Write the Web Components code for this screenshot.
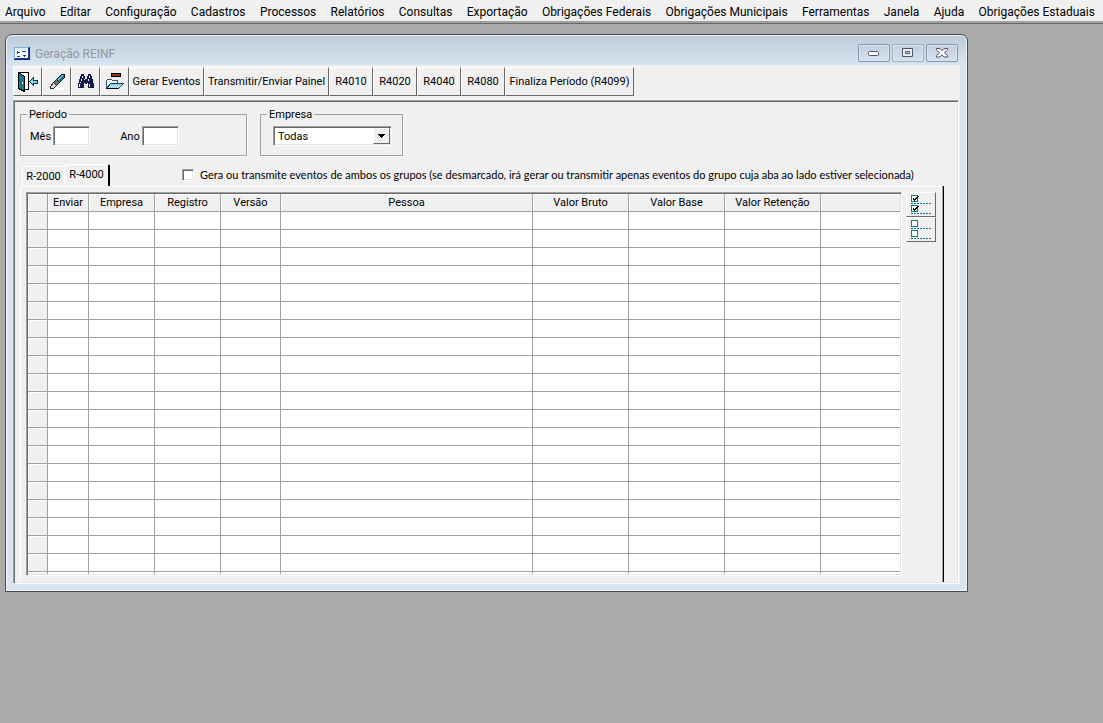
<!DOCTYPE html>
<html lang="pt-BR">
<head>
<meta charset="utf-8">
<title>Geração REINF</title>
<style>
    html, body {
        margin: 0;
        height: 100%;
    }

    body {
        display: flex;
        flex-direction: column;
        background: #a9abaa;
        color: #000;
        font: 11px/13px Roboto, "Liberation Sans", Arial, sans-serif;
        --face: #f0f0f0;
        --shadow: #a0a0a0;
        --dark: #696969;
        --light: #e3e3e3;
        --caption: #d7e4f2;
    }

    .desktop {
        flex: 1;
        min-height: 0;
        display: flex;
        padding: 10px 135px 131px 5px;
    }
</style>
</head>
<body>
<menu-bar></menu-bar>
<main class="desktop">
    <mdi-window caption="Geração REINF">
        <tool-bar slot="toolbar"></tool-bar>
        <reinf-filters></reinf-filters>
        <tab-sheet>
            <event-grid></event-grid>
            <mark-buttons slot="side"></mark-buttons>
        </tab-sheet>
    </mdi-window>
</main>

<script>
function attach(host, html) {
    host.attachShadow({ mode: 'open' }).innerHTML = html;
}

class MenuBar extends HTMLElement {
    constructor() {
        super();
        const items = ['Arquivo', 'Editar', 'Configuração', 'Cadastros', 'Processos', 'Relatórios', 'Consultas',
            'Exportação', 'Obrigações Federais', 'Obrigações Municipais', 'Ferramentas', 'Janela', 'Ajuda',
            'Obrigações Estaduais'];
        attach(this, `
<style>
    :host {
        display: block;
        height: 21px;
        background: var(--face);
        border-bottom: 2px solid var(--shadow);
        box-shadow: 0 1px var(--dark);
        margin-bottom: 1px;
    }

    nav {
        display: flex;
        justify-content: space-between;
        padding: 0 8px 0 5px;
    }

    button {
        font: 12px/24px Roboto, "Noto Sans", sans-serif;
        color: #000;
        background: none;
        border: 0;
        padding: 0;
        white-space: nowrap;
    }
</style>
<nav>${items.map(text => `<button type="button">${text}</button>`).join('')}</nav>`);
    }
}

class MdiWindow extends HTMLElement {
    constructor() {
        super();
        attach(this, `
<style>
    :host {
        flex: 1;
        min-width: 0;
        display: flex;
        flex-direction: column;
        box-sizing: border-box;
        border: 1px solid #4b4b50;
        border-radius: 7px 7px 0 0;
        padding: 0 7px 7px;
        background: linear-gradient(#bccbd8, var(--caption) 30px);
        box-shadow: inset 0 0 0 1px #eef4fa;
    }

    header {
        display: flex;
        align-items: center;
        height: 30px;
        padding: 0 2px 0 1px;
        gap: 5px;
    }

    .caption {
        flex: 1;
        margin: 0;
        padding-top: 8px;
        font: 12px/16px Roboto, "Noto Sans", sans-serif;
        color: #9497a0;
    }

    .icon {
        padding-top: 6px;
    }

    header button {
        width: 32px;
        height: 18px;
        padding: 0;
        border: 1px solid #8796ad;
        border-radius: 2px;
        background: linear-gradient(#c3d1df, #d3e0ed);
        box-shadow: inset 0 0 0 1px #dbe6f1;
        display: grid;
        place-items: center;
    }

    header button:nth-of-type(2) {
        border-color: #a5adba;
    }

    .buttons {
        display: flex;
        gap: 2px;
        padding-top: 5px;
    }

    .client {
        flex: 1;
        min-height: 0;
        display: flex;
        flex-direction: column;
        background: var(--face);
    }

    .body {
        flex: 1;
        min-height: 0;
        display: flex;
        flex-direction: column;
        margin-right: 1px;
        border: 1px solid;
        border-color: var(--shadow) #fff #fff var(--shadow);
        box-shadow: inset 1px 1px var(--dark), inset -1px -1px var(--light);
        padding: 1px 0 1px 1px;
    }

    svg {
        display: block;
    }
</style>
<header>
    <svg class="icon" width="16" height="13" shape-rendering="crispEdges">
        <path fill="#10287c" d="M0 0h16v13H0z"/>
        <path fill="#7fa8dc" d="M0 0h15v12H0z"/>
        <path fill="#d8ecfa" d="M1 1h13v2H1z"/>
        <path fill="#f6fbff" d="M1 3h13v8H1z"/>
        <path fill="#1c3f94" d="M3 5h3v1H3zM3 4h1v3H3zM8 4h4v1H8zM3 9h3v1H3zM9 8h3v1H9zM10 9h1v1h-1zM14 1h1v11h-1zM1 11h14v1H1z"/>
    </svg>
    <h1 class="caption"></h1>
    <div class="buttons">
        <button type="button" aria-label="Minimizar"><svg width="12" height="6"><rect x=".5" y="1.5" width="10" height="4" rx="1" fill="#fff" stroke="#4e5563"/></svg></button>
        <button type="button" aria-label="Restaurar"><svg width="12" height="10"><path fill="#e8eef4" stroke="#4e5563" fill-rule="evenodd" d="M.5 .5h10v8H.5zM3.500 3.500h4v2h-4z"/></svg></button>
        <button type="button" aria-label="Fechar"><svg width="12" height="10"><path fill="#fff" stroke="#4e5563" d="M.5.5h3.500L6 2.700 8 .5h3.500v1.500L8.500 4.800l3 2.700V9H8L6 6.900 4 9H.5V7.500l3-2.700-3-2.800z"/></svg></button>
    </div>
</header>
<div class="client">
    <slot name="toolbar"></slot>
    <div class="body"><slot></slot></div>
</div>`);
        this.shadowRoot.querySelector('.caption').textContent = this.getAttribute('caption');
    }
}

class ToolBar extends HTMLElement {
    constructor() {
        super();
        const actions = ['R4010', 'R4020', 'R4040', 'R4080'];
        attach(this, `
<style>
    :host {
        display: flex;
        height: 29px;
        padding: 2px 0 4px;
    }

    button {
        display: grid;
        place-items: center;
        flex: none;
        box-sizing: border-box;
        width: 44px;
        height: 29px;
        padding: 0;
        border: 1px solid;
        border-color: #fff var(--dark) var(--dark) #fff;
        background: var(--face);
        color: #000;
        font: inherit;
        line-height: 15px;
        white-space: nowrap;
    }

    .tool { width: 29px; }
    .events { width: 75px; }
    .send { width: 125px; }
    .finish { width: 129px; }
</style>
<button class="tool" type="button" aria-label="Sair">
    <svg width="20" height="20" shape-rendering="crispEdges">
        <path fill="#fff" d="M1 1h9v16H1z"/>
        <path fill="#000" d="M0 0h11v1H0zM10 0h1v18h-1zM7 17h4v1H7z"/>
        <path fill="#16788a" stroke="#000" d="M.5.5l6 4v15l-6-3z"/>
        <path fill="#fff" d="M4 10h1v2H4z"/>
        <path fill="#7fd4ee" stroke="#0b3340" d="M11.500 9.500l4-4v2.500h3.500v3h-3.500v2.500z"/>
    </svg>
</button>
<button class="tool" type="button" aria-label="Limpar">
    <svg width="18" height="18" shape-rendering="crispEdges">
        <path fill="#fff" d="M0 14h16v3H0z"/>
        <path fill="#1f8298" stroke="#101820" d="M7.500 7.500l6-6h3v3l-6 6z"/>
        <path fill="#9adbe8" d="M9 7l5-5h1L9 8z"/>
        <path fill="#707070" stroke="#202020" d="M5.500 9.500l3-3 3 3-3 3z"/>
        <path fill="#d8d8d8" stroke="#303030" d="M2.500 13.500l3-4 3 3-3 3h-3z"/>
    </svg>
</button>
<button class="tool" type="button" aria-label="Localizar">
    <svg width="16" height="15" shape-rendering="crispEdges">
        <path fill="#121c4a" d="M3 0h3v2H3zM10 0h3v2h-3zM2 2h5v3h2V2h5v3h1v4h1v5h-6V9H6v5H0V9h1V5h1zM7 5h2v5H7z"/>
        <path fill="#fff" d="M4 2h1v2H4zM11 2h1v2h-1zM3 5h1v2H3zM10 5h1v2h-1zM1 10h1v3H1zM2 8h1v1H2zM11 10h1v3h-1zM6 5h1v1H6z"/>
    </svg>
</button>
<button class="tool" type="button" aria-label="Abrir">
    <svg width="19" height="17" shape-rendering="crispEdges">
        <path fill="#9c3c12" stroke="#000" d="M6.500 .5h9v3h-9z"/>
        <path fill="#fff" stroke="#35586c" d="M1.500 15.500v-8l1-1h4l1 1h5v3"/>
        <path fill="#83c6e2" stroke="#10506a" d="M1.500 15.500l4-5h13l-5 5z"/>
        <path stroke="#d9f4ff" stroke-dasharray="1 1" d="M5 12.500h11M4 13.500h11M4 14.500h10"/>
        <path fill="#000" d="M1 15h13v1H1z"/>
    </svg>
</button>
<button class="events" type="button">Gerar Eventos</button>
<button class="send" type="button">Transmitir/Enviar Painel</button>
${actions.map(text => `<button type="button">${text}</button>`).join('')}
<button class="finish" type="button">Finaliza Período (R4099)</button>`);
    }
}

class ReinfFilters extends HTMLElement {
    constructor() {
        super();
        attach(this, `
<style>
    :host {
        display: flex;
        gap: 13px;
        padding: 6px 5px 0;
    }

    fieldset {
        display: flex;
        align-items: center;
        box-sizing: border-box;
        height: 48px;
        margin: 0;
        padding: 0 9px 4px;
        border: 1px solid var(--shadow);
        box-shadow: 1px 1px #fff;
    }

    .period { width: 227px; gap: 30px; }
    .company { width: 143px; padding: 0 10px 4px 12px; }

    legend {
        margin-left: -3px;
        padding: 0 2px;
    }

    .company legend {
        margin-left: -6px;
    }

    .period label {
        display: flex;
        align-items: center;
        gap: 2px;
    }

    input, .combo {
        box-sizing: border-box;
        height: 20px;
        border: 1px solid;
        border-color: var(--shadow) #fff #fff var(--shadow);
        box-shadow: inset 1px 1px var(--dark), inset -1px -1px var(--light);
        background: #fff;
        font: inherit;
    }

    input {
        width: 37px;
        padding: 2px 3px;
    }

    .combo {
        flex: 1;
        display: grid;
        grid-template-columns: 1fr 17px;
        align-items: center;
        padding: 1px;
    }

    select {
        grid-area: 1 / 1 / 2 / 3;
        appearance: none;
        border: 0;
        padding: 0 3px;
        background: none;
        color: #000;
        font: inherit;
    }

    .arrow {
        grid-area: 1 / 2;
        align-self: stretch;
        display: grid;
        place-items: center;
        border: 1px solid;
        border-color: #fff var(--dark) var(--dark) #fff;
        background: var(--face);
        pointer-events: none;
    }
</style>
<fieldset class="period">
    <legend>Período</legend>
    <label>Mês <input type="text"></label>
    <label>Ano <input type="text"></label>
</fieldset>
<fieldset class="company">
    <legend>Empresa</legend>
    <div class="combo">
        <select aria-label="Empresa"><option>Todas</option></select>
        <span class="arrow"><svg width="7" height="4" shape-rendering="crispEdges"><path d="M0 0h7v1H0zM1 1h5v1H1zM2 2h3v1H2zM3 3h1v1H3z"/></svg></span>
    </div>
</fieldset>`);
    }
}

class TabSheet extends HTMLElement {
    constructor() {
        super();
        attach(this, `
<style>
    :host {
        flex: 1;
        min-height: 0;
        display: flex;
        flex-direction: column;
        padding: 8px 16px 0 5px;
    }

    .head {
        display: flex;
        align-items: flex-end;
        padding-left: 2px;
    }

    .head button {
        box-sizing: border-box;
        width: 42px;
        height: 20px;
        padding: 0;
        border: 0 solid #fff;
        border-width: 1px 0 0 1px;
        border-radius: 3px 0 0 0;
        background: none;
        color: #000;
        font: inherit;
    }

    .head button[aria-selected=true] {
        width: 46px;
        height: 22px;
        padding: 0 0 3px;
        border-right: 2px solid #000;
        border-radius: 3px 2px 0 0;
    }

    label {
        display: flex;
        align-items: center;
        gap: 6px;
        margin-left: 72px;
        padding-bottom: 5px;
        font-family: Lato, "Liberation Sans", sans-serif;
        white-space: nowrap;
    }

    input {
        appearance: none;
        box-sizing: border-box;
        width: 12px;
        height: 12px;
        margin: 0;
        border: 1px solid;
        border-color: var(--shadow) #fff #fff var(--shadow);
        box-shadow: inset 1px 1px var(--dark), inset -1px -1px var(--light);
        background: #fff;
    }

    .page {
        flex: 1;
        min-height: 0;
        display: flex;
        gap: 4px;
        padding: 5px 6px 6px 5px;
        border: 0 solid #fff;
        border-width: 1px 0 0 1px;
        box-shadow: 1px 0 var(--shadow), 2px 0 #000;
    }
</style>
<div class="head" role="tablist">
    <button type="button" role="tab">R-2000</button>
    <button type="button" role="tab" aria-selected="true">R-4000</button>
    <label><input type="checkbox"> Gera ou transmite eventos de ambos os grupos (se desmarcado, irá gerar ou transmitir apenas eventos do grupo cuja aba ao lado estiver selecionada)</label>
</div>
<div class="page">
    <slot></slot>
    <slot name="side"></slot>
</div>`);
    }
}

class EventGrid extends HTMLElement {
    constructor() {
        super();
        const columns = [['', 20], ['Enviar', 41], ['Empresa', 66], ['Registro', 66], ['Versão', 60], ['Pessoa', 252],
            ['Valor Bruto', 96], ['Valor Base', 96], ['Valor Retenção', 96], ['', 0]];
        const row = `<tr>${columns.map(() => '<td></td>').join('')}</tr>`;
        attach(this, `
<style>
    :host {
        flex: 1;
        min-width: 0;
        overflow: hidden;
        box-sizing: border-box;
        border: 1px solid;
        border-color: var(--shadow) #fff #fff var(--shadow);
        background: linear-gradient(var(--dark), var(--dark)) 0 0 / 1px 100% no-repeat,
            linear-gradient(var(--dark), var(--dark)) 0 0 / 100% 1px no-repeat, var(--light);
        padding: 1px;
        display: flex;
    }

    .scroll {
        flex: 1;
        overflow: hidden;
        background: #fff;
    }

    table {
        width: 100%;
        table-layout: fixed;
        border-collapse: separate;
        border-spacing: 0;
    }

    th, td {
        box-sizing: border-box;
        height: 18px;
        padding: 0;
        border: 0 solid var(--shadow);
        border-width: 0 1px 1px 0;
        font-weight: normal;
        line-height: 17px;
        white-space: nowrap;
    }

    th, td:first-child {
        background: var(--face);
        box-shadow: inset 1px 1px #fff;
    }

    th:last-child, td:last-child {
        border-right: 0;
    }
</style>
<div class="scroll">
    <table>
        <colgroup>${columns.map(([, width]) => width ? `<col style="width: ${width}px">` : '<col>').join('')}</colgroup>
        <thead><tr>${columns.map(([text]) => `<th>${text}</th>`).join('')}</tr></thead>
        <tbody>${row.repeat(40)}</tbody>
    </table>
</div>`);
    }
}

class MarkButtons extends HTMLElement {
    constructor() {
        super();
        const box = (y, ticked) => `
        <path fill="#fff" stroke="#16788a" d="M.5 ${y}.5h6v6h-6z"/>
        <path stroke="#16788a" stroke-dasharray="2 1" d="M0 ${y + 8}.5h20"/>
        ${ticked ? `<path fill="#000" d="M2 ${y + 3}h1v1h1v-1h1v-1h1v-1h2v1h-1v1h-1v1h-1v1h-1v1h-1v-1h-1z"/>` : ''}`;
        const icon = ticked => `<svg width="20" height="20" shape-rendering="crispEdges">${box(0, ticked)}${box(10, ticked)}</svg>`;
        attach(this, `
<style>
    :host {
        display: flex;
        flex-direction: column;
    }

    button {
        display: grid;
        place-items: center;
        box-sizing: border-box;
        width: 30px;
        height: 25px;
        padding: 0;
        border: 1px solid;
        border-color: #fff var(--dark) var(--dark) #fff;
        background: var(--face);
    }
</style>
<button type="button" aria-label="Marcar todos">${icon(true)}</button>
<button type="button" aria-label="Desmarcar todos">${icon(false)}</button>`);
    }
}

customElements.define('menu-bar', MenuBar);
customElements.define('mdi-window', MdiWindow);
customElements.define('tool-bar', ToolBar);
customElements.define('reinf-filters', ReinfFilters);
customElements.define('tab-sheet', TabSheet);
customElements.define('event-grid', EventGrid);
customElements.define('mark-buttons', MarkButtons);
</script>
</body>
</html>
